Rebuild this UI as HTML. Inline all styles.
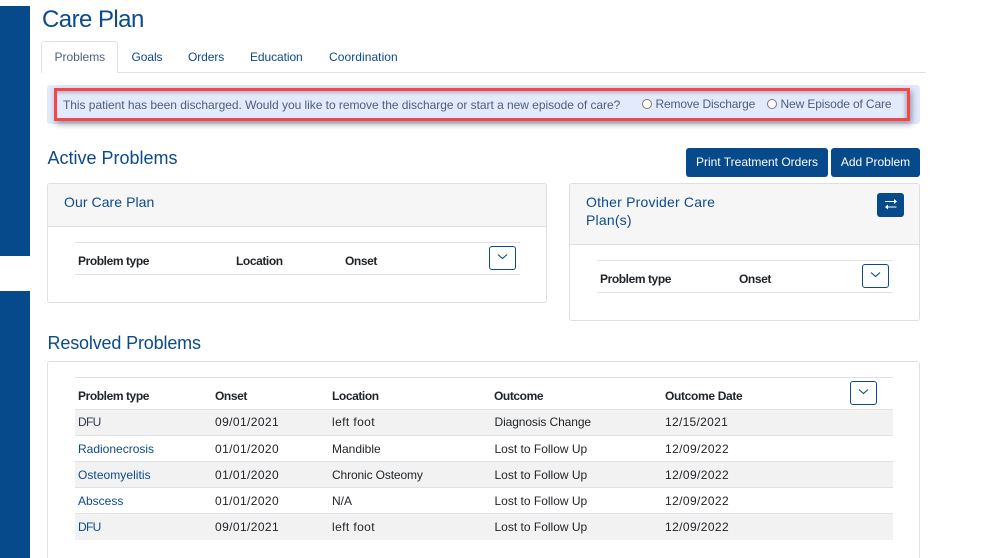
<!DOCTYPE html>
<html lang="en">
<head>
<meta charset="utf-8">
<title>Care Plan</title>
<style>
html,body{margin:0;padding:0;background:#fff;width:985px;height:558px;overflow:hidden;}
body{font-family:"Liberation Sans",Arial,sans-serif;color:#212529;}
#wrap{position:absolute;left:0;top:0;width:985px;height:558px;overflow:hidden;background:#fff;}
.b{position:absolute;box-sizing:border-box;}
.t{position:absolute;white-space:nowrap;line-height:16px;font-size:12px;}
.blue{color:#0b4a8c;}
.tab{font-size:12px;color:#0b4a8c;letter-spacing:-.08px;}
.h{font-weight:bold;color:#212529;letter-spacing:-.42px;}
.d{letter-spacing:.4px;}
.line{position:absolute;height:1px;background:#dee2e6;}
.panel{position:absolute;box-sizing:border-box;border:1px solid #dfdfdf;border-radius:3px;background:#fff;overflow:hidden;}
.phead{position:absolute;left:0;top:0;right:0;background:#f6f6f6;border-bottom:1px solid #dfdfdf;box-sizing:border-box;}
.chev{position:absolute;box-sizing:border-box;width:27px;height:24px;border:1px solid #0b4a8c;border-radius:3px;background:#fff;}
.chev svg{position:absolute;left:7px;top:5px;}
.btn{position:absolute;box-sizing:border-box;background:#064a8c;border-radius:3px;color:#fff;font-size:12px;text-align:center;line-height:29px;white-space:nowrap;}
.row{position:absolute;left:75px;width:818px;height:26px;box-sizing:border-box;border-bottom:1px solid #dee2e6;}
.odd{background:#f2f2f2;}
.radio{position:absolute;box-sizing:border-box;width:10px;height:10px;border:1px solid #777;border-radius:50%;background:#fff;}
</style>
</head>
<body>
<div id="wrap">
<div class="b" style="left:0;top:6px;width:30px;height:250px;background:#064a8c"></div>
<div class="b" style="left:0;top:291px;width:30px;height:267px;background:#064a8c"></div>

<div class="t blue" style="left:42px;top:6px;font-size:24px;line-height:28px;letter-spacing:-.55px">Care Plan</div>

<div class="line" style="left:41px;top:72px;width:885px"></div>
<div class="b" style="left:41px;top:41px;width:77px;height:32px;background:#fff;border:1px solid #dee2e6;border-bottom:0;border-radius:3px 3px 0 0"></div>
<div class="t tab" style="left:54.5px;top:49px;color:#4f5e7b;letter-spacing:0">Problems</div>
<div class="t tab" style="left:131.5px;top:49px">Goals</div>
<div class="t tab" style="left:188px;top:49px">Orders</div>
<div class="t tab" style="left:250px;top:49px">Education</div>
<div class="t tab" style="left:329px;top:49px;letter-spacing:.06px">Coordination</div>

<div class="b" style="left:47px;top:85px;width:873px;height:39px;background:#e2eafb;border-radius:3px"></div>
<div class="b" style="left:54px;top:88px;width:856px;height:33px;border:3px solid #f54545;box-shadow:2px 3px 6px rgba(40,50,80,.45)"></div>
<div class="b" style="left:57px;top:91px;width:850px;height:27px;background:#e2eafb;box-shadow:inset -2px 2px 3px rgba(40,50,80,.28)"></div>
<div class="t" style="left:63px;top:97px;color:#4f5e7b;letter-spacing:-.04px">This patient has been discharged. Would you like to remove the discharge or start a new episode of care?</div>
<div class="radio" style="left:642px;top:99px"></div>
<div class="t" style="left:655.5px;top:96px;color:#4f5e7b;letter-spacing:-.15px">Remove Discharge</div>
<div class="radio" style="left:767px;top:99px"></div>
<div class="t" style="left:780.5px;top:96px;color:#4f5e7b;letter-spacing:-.13px">New Episode of Care</div>

<div class="t blue" style="left:47.5px;top:147px;font-size:18px;line-height:22px">Active Problems</div>
<div class="btn" style="left:686px;top:148px;width:142px;height:29px">Print Treatment Orders</div>
<div class="btn" style="left:831px;top:148px;width:89px;height:29px">Add Problem</div>

<div class="panel" style="left:47px;top:183px;width:500px;height:120px">
  <div class="phead" style="height:43px"></div>
</div>
<div class="t blue" style="left:64px;top:193px;font-size:14px;line-height:18px;letter-spacing:.07px">Our Care Plan</div>
<div class="line" style="left:75px;top:242px;width:445px"></div>
<div class="line" style="left:75px;top:274px;width:445px"></div>
<div class="t h" style="left:78px;top:253px">Problem type</div>
<div class="t h" style="left:236px;top:253px">Location</div>
<div class="t h" style="left:345px;top:253px">Onset</div>
<div class="chev" style="left:489px;top:246px"><svg width="11" height="10" viewBox="0 0 11 10"><path d="M1 2.5L5.5 6.5L10 2.5" fill="none" stroke="#0b4a8c" stroke-width="1.1"/></svg></div>

<div class="panel" style="left:569px;top:183px;width:351px;height:138px">
  <div class="phead" style="height:61px"></div>
</div>
<div class="t blue" style="left:586px;top:193px;font-size:14px;line-height:18px;letter-spacing:.2px">Other Provider Care<br>Plan(s)</div>
<div class="b" style="left:877px;top:193px;width:27px;height:24px;background:#064a8c;border-radius:3px">
  <svg width="27" height="24" viewBox="0 0 27 24" style="position:absolute;left:0;top:0"><path d="M8 8.5H17.5" fill="none" stroke="#fff" stroke-width="1"/><path d="M17 6L20 8.5L17 11Z" fill="#fff"/><path d="M19.5 14H10.5" fill="none" stroke="#fff" stroke-width="1"/><path d="M11 11.5L8 14L11 16.5Z" fill="#fff"/></svg>
</div>
<div class="line" style="left:597px;top:260px;width:295px"></div>
<div class="line" style="left:597px;top:292px;width:295px"></div>
<div class="t h" style="left:600px;top:271px">Problem type</div>
<div class="t h" style="left:739px;top:271px">Onset</div>
<div class="chev" style="left:862px;top:264px"><svg width="11" height="10" viewBox="0 0 11 10"><path d="M1 2.5L5.5 6.5L10 2.5" fill="none" stroke="#0b4a8c" stroke-width="1.1"/></svg></div>

<div class="t blue" style="left:47.5px;top:332px;font-size:18px;line-height:22px;letter-spacing:-.16px">Resolved Problems</div>
<div class="panel" style="left:47px;top:361px;width:873px;height:210px"></div>
<div class="line" style="left:75px;top:377px;width:818px"></div>
<div class="line" style="left:75px;top:409px;width:818px"></div>
<div class="t h" style="left:78px;top:388px">Problem type</div>
<div class="t h" style="left:215px;top:388px">Onset</div>
<div class="t h" style="left:332px;top:388px">Location</div>
<div class="t h" style="left:494px;top:388px">Outcome</div>
<div class="t h" style="left:665px;top:388px;letter-spacing:-.33px">Outcome Date</div>
<div class="chev" style="left:850px;top:381px"><svg width="11" height="10" viewBox="0 0 11 10"><path d="M1 2.5L5.5 6.5L10 2.5" fill="none" stroke="#0b4a8c" stroke-width="1.1"/></svg></div>

<div class="row odd" style="top:410px"></div>
<div class="row" style="top:436px"></div>
<div class="row odd" style="top:462px"></div>
<div class="row" style="top:488px"></div>
<div class="row odd" style="top:514px;border-bottom:0"></div>

<div class="t" style="left:78px;top:414px;color:#2f3a4c;letter-spacing:-.7px">DFU</div>
<div class="t d" style="left:215px;top:414px">09/01/2021</div>
<div class="t d" style="left:332px;top:414px">left foot</div>
<div class="t" style="left:494.5px;top:414px;letter-spacing:-.1px">Diagnosis Change</div>
<div class="t d" style="left:665px;top:414px;letter-spacing:.3px">12/15/2021</div>

<div class="t" style="left:78px;top:441px;color:#0b4a8c">Radionecrosis</div>
<div class="t d" style="left:215px;top:441px">01/01/2020</div>
<div class="t" style="left:332px;top:441px">Mandible</div>
<div class="t" style="left:494.5px;top:441px">Lost to Follow Up</div>
<div class="t d" style="left:665px;top:441px">12/09/2022</div>

<div class="t" style="left:78px;top:467px;color:#0b4a8c;letter-spacing:.05px">Osteomyelitis</div>
<div class="t d" style="left:215px;top:467px">01/01/2020</div>
<div class="t" style="left:332px;top:467px;letter-spacing:-.13px">Chronic Osteomy</div>
<div class="t" style="left:494.5px;top:467px">Lost to Follow Up</div>
<div class="t d" style="left:665px;top:467px">12/09/2022</div>

<div class="t" style="left:78px;top:493px;color:#0b4a8c">Abscess</div>
<div class="t d" style="left:215px;top:493px">01/01/2020</div>
<div class="t" style="left:332px;top:493px">N/A</div>
<div class="t" style="left:494.5px;top:493px">Lost to Follow Up</div>
<div class="t d" style="left:665px;top:493px">12/09/2022</div>

<div class="t" style="left:78px;top:519px;color:#0b4a8c;letter-spacing:-.7px">DFU</div>
<div class="t d" style="left:215px;top:519px">09/01/2021</div>
<div class="t d" style="left:332px;top:519px">left foot</div>
<div class="t" style="left:494.5px;top:519px">Lost to Follow Up</div>
<div class="t d" style="left:665px;top:519px">12/09/2022</div>
</div>
</body>
</html>
